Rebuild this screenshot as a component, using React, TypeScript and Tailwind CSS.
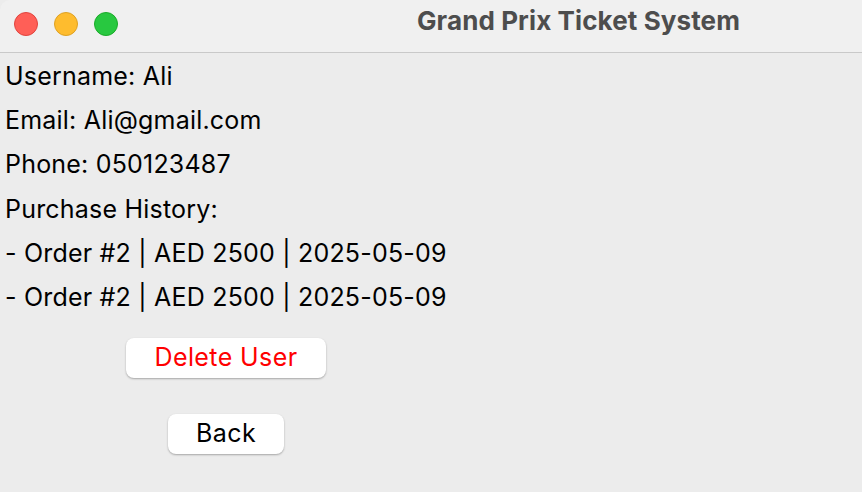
function App() {
  const orders = [
    { id: 2, amount: 2500, date: "2025-05-09" },
    { id: 2, amount: 2500, date: "2025-05-09" },
  ];

  return (
    <div className="w-[862px] h-[492px] overflow-hidden bg-[#ececec] font-['Inter',sans-serif] text-black">
      {/* title bar */}
      <div className="h-[53px] bg-[#f0f0f0] border-b border-[#c9c9c9] flex items-center rounded-tl-[10px]">
        <div className="flex items-center gap-[16px] pl-[14px] pb-[4px]">
          <span className="w-[24px] h-[24px] rounded-full bg-[#ff5f57] border border-[#e0443e]" />
          <span className="w-[24px] h-[24px] rounded-full bg-[#febc2e] border border-[#dea123]" />
          <span className="w-[24px] h-[24px] rounded-full bg-[#28c840] border border-[#1aab29]" />
        </div>
        <h1 className="ml-[299px] text-[26px] tracking-[0.1px] font-bold text-[#4d4d4d] pb-[12px]">
          Grand Prix Ticket System
        </h1>
      </div>

      {/* content */}
      <div className="pl-[5px] pt-[1px] text-[25px] tracking-[0.2px] leading-[44.2px]">
        <p>Username: Ali</p>
        <p>Email: Ali@gmail.com</p>
        <p>Phone: 050123487</p>
        <p>Purchase History:</p>
        {orders.map((o, i) => (
          <p key={i}>
            - Order #{o.id} | AED {o.amount} | {o.date}
          </p>
        ))}
      </div>

      <div className="w-[452px] flex flex-col items-center mt-[19px] gap-[36px]">
        <button className="w-[200px] h-[40px] bg-white rounded-[8px] shadow-[0_1px_2px_rgba(0,0,0,0.3)] text-[25px] tracking-[0.4px] text-[#ff0000]">
          Delete User
        </button>
        <button className="w-[116px] h-[40px] bg-white rounded-[8px] shadow-[0_1px_2px_rgba(0,0,0,0.3)] text-[25px] tracking-[0.4px]">
          Back
        </button>
      </div>
    </div>
  );
}

export default App;
